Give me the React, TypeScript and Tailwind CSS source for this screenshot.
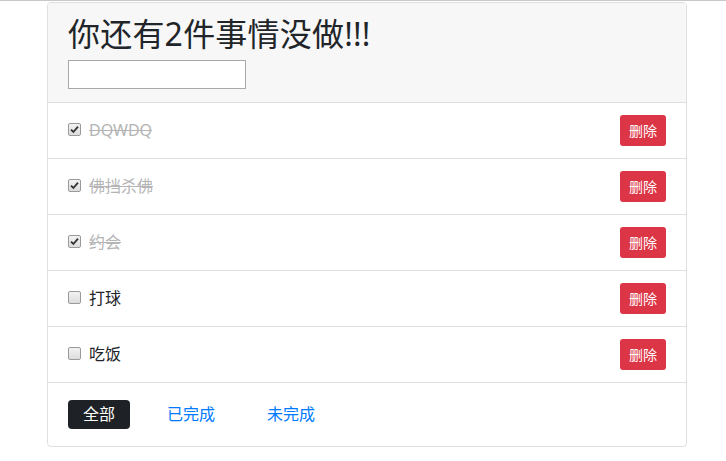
import { useState } from "react";

type Todo = {
  id: number;
  name: string;
  done: boolean;
};

const initialTodos: Todo[] = [
  { id: 1, name: "DQWDQ", done: true },
  { id: 2, name: "佛挡杀佛", done: true },
  { id: 3, name: "约会", done: true },
  { id: 4, name: "打球", done: false },
  { id: 5, name: "吃饭", done: false },
];

const Check = ({ checked }: { checked: boolean }) => (
  <span className="flex h-[13px] w-[13px] items-center justify-center rounded-[2px] border border-[#9a9a9a] bg-gradient-to-b from-[#f2f2f2] to-[#dcdcdc]">
    {checked && (
      <svg width="9" height="9" viewBox="0 0 9 9">
        <path d="M1 4.6 L3.4 7 L8 1.6" fill="none" stroke="#333" strokeWidth="1.8" />
      </svg>
    )}
  </span>
);

export default function App() {
  const [todos, setTodos] = useState<Todo[]>(initialTodos);
  const [filter, setFilter] = useState("all");

  const left = todos.filter((t) => !t.done).length;

  const toggle = (id: number) => {
    setTodos(todos.map((t) => (t.id === id ? { ...t, done: !t.done } : t)));
  };

  const remove = (id: number) => {
    setTodos(todos.filter((t) => t.id !== id));
  };

  const shown = todos.filter((t) =>
    filter === "all" ? true : filter === "done" ? t.done : !t.done
  );

  const tabs = [
    { key: "all", label: "全部" },
    { key: "done", label: "已完成" },
    { key: "todo", label: "未完成" },
  ];

  return (
    <div
      className="min-h-[461px] border-t border-[#c8c8c8] bg-white pt-px"
      style={{ fontFamily: '"Noto Sans", "Noto Sans CJK SC", sans-serif' }}
    >
      <div className="ml-[47px] w-[640px] overflow-hidden rounded-[4px] border border-[#dfdfdf]">
        <div className="border-b border-[#dfdfdf] bg-[#f7f7f7] px-5 pb-[13px] pt-[12px]">
          <h1 className="mb-[7px] text-[32px] leading-[38px] tracking-[0.2px] text-[#212529]">
            你还有{left}件事情没做!!!
          </h1>
          <input
            type="text"
            className="block h-[29px] w-[178px] border border-[#a9a9a9] bg-white px-1 text-sm outline-none"
          />
        </div>
        {shown.map((t) => (
          <div
            key={t.id}
            className="flex h-[56px] items-center justify-between border-b border-[#dfdfdf] px-5"
          >
            <label className="-mt-[2px] flex cursor-pointer items-center" onClick={() => toggle(t.id)}>
              <Check checked={t.done} />
              <span
                className={
                  "ml-[8px] text-[16px] " +
                  (t.done ? "text-[#b4b4b4] line-through" : "text-[#212529]")
                }
              >
                {t.name}
              </span>
            </label>
            <button
              onClick={() => remove(t.id)}
              className="h-[31px] w-[46px] rounded-[3px] bg-[#dc3545] text-[14px] text-white"
            >
              删除
            </button>
          </div>
        ))}
        <div className="flex h-[63px] items-center gap-[22px] px-5">
          {tabs.map((tab) => (
            <button
              key={tab.key}
              onClick={() => setFilter(tab.key)}
              className={
                "h-[29px] rounded-[4px] px-[15px] text-[16px] leading-[29px] " +
                (filter === tab.key ? "bg-[#1e2226] text-white" : "text-[#007bff]")
              }
            >
              {tab.label}
            </button>
          ))}
        </div>
      </div>
    </div>
  );
}
